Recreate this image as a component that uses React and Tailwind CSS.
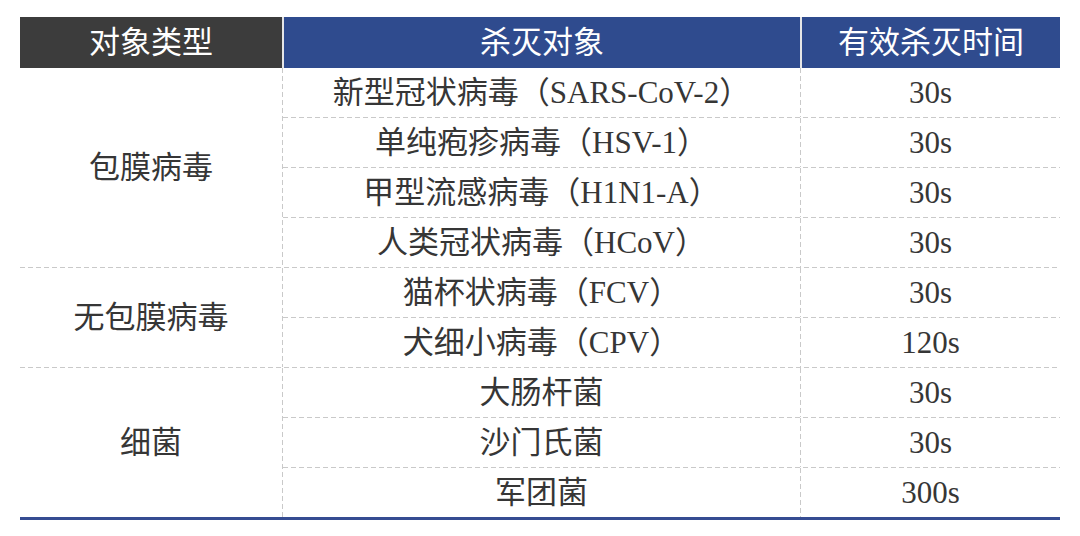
const groups = [
    {
        type: '包膜病毒',
        rows: [
            ['新型冠状病毒（SARS-CoV-2）', '30s'],
            ['单纯疱疹病毒（HSV-1）', '30s'],
            ['甲型流感病毒（H1N1-A）', '30s'],
            ['人类冠状病毒（HCoV）', '30s'],
        ],
    },
    {
        type: '无包膜病毒',
        rows: [
            ['猫杯状病毒（FCV）', '30s'],
            ['犬细小病毒（CPV）', '120s'],
        ],
    },
    {
        type: '细菌',
        rows: [
            ['大肠杆菌', '30s'],
            ['沙门氏菌', '30s'],
            ['军团菌', '300s'],
        ],
    },
]

const HLine = () => (
    <div className="h-px w-full bg-[repeating-linear-gradient(to_right,#c9c9c9_0px,#c9c9c9_5px,transparent_5px,transparent_8px)]" />
)
const VLine = () => (
    <div className="w-px self-stretch shrink-0 bg-[repeating-linear-gradient(to_bottom,#c9c9c9_0px,#c9c9c9_5px,transparent_5px,transparent_8px)]" />
)

export default function App() {
    return (
        <div className="w-[1080px] h-[536px] bg-white pt-[17px] pl-[20px] font-['Liberation_Serif','Noto_Sans_CJK_SC',serif] text-[31px] leading-none">
            <div className="w-[1040px]">
                {/* header */}
                <div className="flex h-[51px] text-white">
                    <div className="w-[262px] bg-[#3c3c3c] flex items-center justify-center">对象类型</div>
                    <div className="w-[518px] bg-[#2f4b8e] border-l-2 border-[#e6e6e6] flex items-center justify-center">杀灭对象</div>
                    <div className="flex-1 bg-[#2f4b8e] border-l-2 border-[#e6e6e6] flex items-center justify-center">有效杀灭时间</div>
                </div>

                {/* body */}
                <div className="border-b-[3px] border-[#354c92] text-[#363636]">
                    {groups.map((g, gi) => (
                        <div key={g.type}>
                            {gi > 0 && <HLine />}
                            <div className="flex">
                                <div className="w-[262px] flex items-center justify-center">{g.type}</div>
                                <VLine />
                                <div className="flex-1">
                                    {g.rows.map((r, ri) => (
                                        <div key={r[0]}>
                                            {ri > 0 && <HLine />}
                                            <div className="flex h-[49px]">
                                                <div className="w-[517px] flex items-center justify-center">{r[0]}</div>
                                                <VLine />
                                                <div className="flex-1 flex items-center justify-center">{r[1]}</div>
                                            </div>
                                        </div>
                                    ))}
                                </div>
                            </div>
                        </div>
                    ))}
                </div>
            </div>
        </div>
    )
}
